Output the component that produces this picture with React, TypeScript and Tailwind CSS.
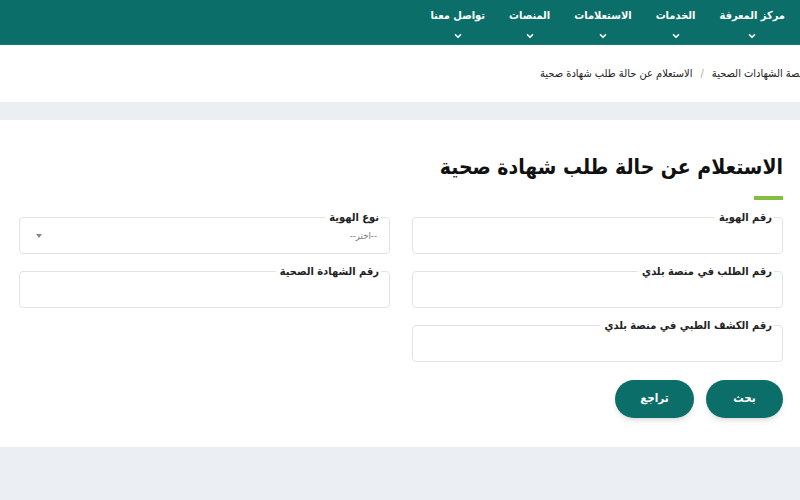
import { ChevronDown } from 'lucide-react';

const NAV_ITEMS = ['مركز المعرفة', 'الخدمات', 'الاستعلامات', 'المنصات', 'تواصل معنا'];

const Field = ({ label, select }: { label: string; select?: boolean }) => (
	<div className="relative h-[37px] rounded-[4px] border border-[#e3e3e3] bg-white">
		<span className="absolute -top-[7px] right-[8px] bg-white pl-1 pr-0.5 text-[11px] font-bold leading-[14px] text-[#222]">
			{label}
		</span>
		{select && (
			<>
				<span className="absolute right-[12px] top-[11px] text-[9.5px] text-[#777]">--اختر--</span>
				<span className="absolute left-[16px] top-[16px] h-0 w-0 border-x-[3px] border-t-[4px] border-x-transparent border-t-[#888]" />
			</>
		)}
	</div>
);

const App = () => {
	return (
		<div
			dir="rtl"
			className="h-[500px] w-[800px] overflow-hidden bg-[#ebeef3]"
			style={{ fontFamily: '"DejaVu Sans Condensed", "DejaVu Sans", sans-serif' }}
		>
			{/* top nav */}
			<div className="flex h-[45px] items-start gap-[24px] border-b border-[#0e7a73] bg-[#0b6e68] pr-[15px] pt-[7px]">
				{NAV_ITEMS.map((item) => (
					<div key={item} className="flex flex-col items-center">
						<span className="text-[11px] font-bold leading-[18px] text-white">{item}</span>
						<ChevronDown className="mt-[6px] h-[10px] w-[10px] text-white" strokeWidth={4} />
					</div>
				))}
			</div>
			<div className="h-px bg-white" />

			{/* breadcrumb */}
			<div className="flex h-[56px] items-center overflow-hidden bg-white">
				<div className="-mr-[8px] flex items-center gap-[8px] whitespace-nowrap text-[11px] text-[#222]">
					<span>منصة الشهادات الصحية</span>
					<span className="text-[#aaa]">/</span>
					<span>الاستعلام عن حالة طلب شهادة صحية</span>
				</div>
			</div>

			<div className="h-[18px]" />

			{/* form card */}
			<div className="h-[327px] bg-white pl-[19px] pr-[17px] pt-[30px]">
				<h1 className="text-[21px] font-bold leading-[34px] text-[#111]">الاستعلام عن حالة طلب شهادة صحية</h1>
				<div className="mt-[12px] h-[4px] w-[29px] bg-[#84bd41]" />

				<div className="mt-[17px] grid grid-cols-2 gap-x-[22px] gap-y-[17px]">
					<Field label="رقم الهوية" />
					<Field label="نوع الهوية" select />
					<Field label="رقم الطلب في منصة بلدي" />
					<Field label="رقم الشهادة الصحية" />
					<Field label="رقم الكشف الطبي في منصة بلدي" />
					<div />
				</div>

				<div className="mt-[18px] flex gap-[12px]">
					<button className="h-[38px] w-[77px] rounded-full bg-[#0b6e68] text-[11.5px] font-bold text-white shadow-md">
						بحث
					</button>
					<button className="h-[38px] w-[79px] rounded-full bg-[#0b6e68] text-[11.5px] font-bold text-white shadow-md">
						تراجع
					</button>
				</div>
			</div>
		</div>
	);
};

export default App;
